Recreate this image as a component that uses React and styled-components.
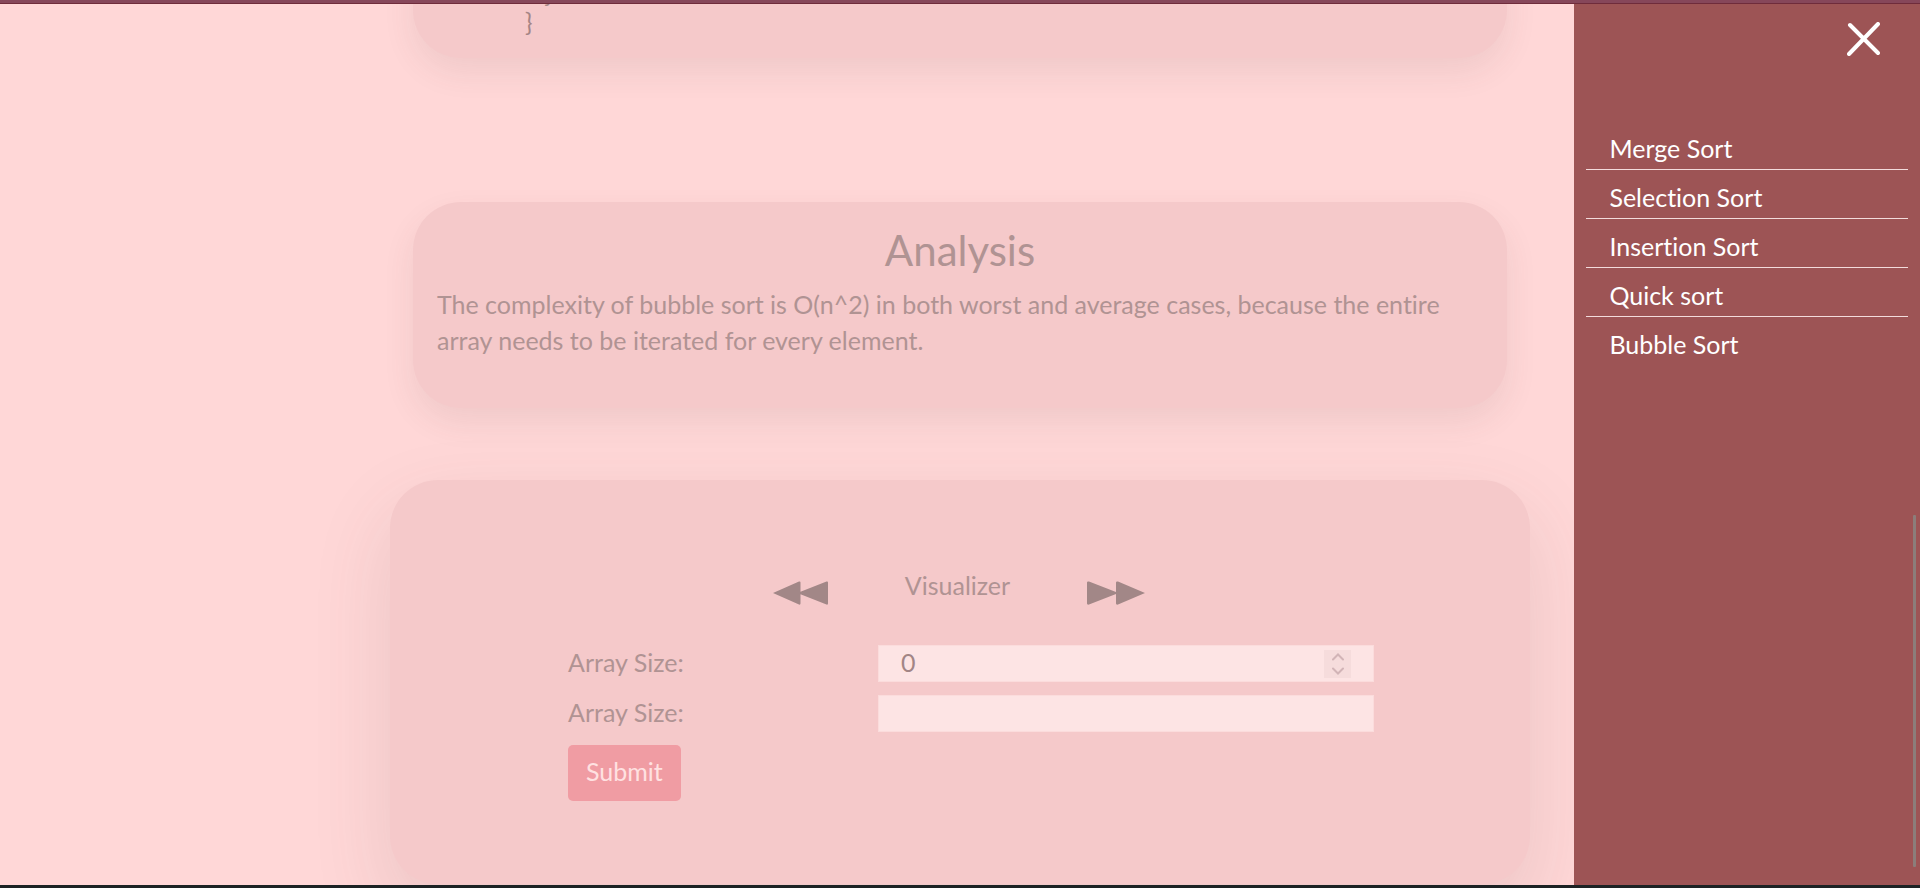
import React, { useState } from "react";
import styled, { createGlobalStyle } from "styled-components";

const GlobalStyle = createGlobalStyle`
  *, *::before, *::after { box-sizing: border-box; }
  html, body { margin: 0; padding: 0; }
  body {
    background: #ffd7d7;
    color: #b09393;
    font-family: Lato, "Liberation Sans", sans-serif;
    font-size: 25px;
    line-height: 36px;
    font-variant-ligatures: none;
  }
`;

const Page = styled.div`
  display: flex;
  flex-direction: column;
  height: 100vh;
  overflow: hidden;
  border-top: 3px solid #86475a;
  border-bottom: 3px solid #1c2224;
`;

const Main = styled.main`
  flex: 1;
  min-height: 0;
  display: flex;
  flex-direction: column;
  justify-content: flex-end;
  align-items: center;
  overflow: hidden;
  border-top: 1px solid #6f2c3b;
  padding: 0 24px 1px;
`;

const Column = styled.div`
  width: 100%;
  max-width: 1140px;
  display: flex;
  flex-direction: column;
  flex-shrink: 0;
`;

const Card = styled.section`
  background: #f5c9ca;
  border-radius: 48px;
`;

const TextCard = styled(Card)`
  margin: 0 23px;
  box-shadow: 0 14px 32px rgba(90, 70, 70, 0.09);
`;

const CodeCard = styled(TextCard)`
  margin-bottom: 144px;
  padding: 40px 24px 22px 112px;
`;

const Code = styled.pre`
  margin: 0;
  color: #a58585;
  font-family: Lato, "Liberation Sans", sans-serif;
  font-size: 25px;
  line-height: 29px;
`;

const AnalysisCard = styled(TextCard)`
  margin-bottom: 72px;
  padding: 24px 24px 50px;
`;

const Title = styled.h2`
  margin: 0 0 12px;
  font-size: 42px;
  font-weight: 400;
  line-height: 48px;
  text-align: center;
`;

const Paragraph = styled.p`
  margin: 0;
`;

const VisualizerCard = styled(Card)`
  padding: 87px 156px 83px 178px;
  box-shadow: 0 32px 80px rgba(90, 70, 70, 0.13);
`;

const Player = styled.div`
  display: flex;
  justify-content: center;
  align-items: flex-start;
  gap: 77px;
  height: 38px;
  margin: 0 0 40px -24px;
`;

const SkipButton = styled.button`
  display: flex;
  margin: 14px 0 0;
  padding: 0;
  border: 0;
  background: none;
  color: #a28787;
  cursor: pointer;
`;

const Form = styled.form`
  display: grid;
  grid-template-columns: 5fr 8fr;
  row-gap: 13px;
`;

const Label = styled.label`
  line-height: 34px;
`;

const Field = styled.div`
  display: flex;
  align-items: center;
  height: 37px;
  padding: 0 22px;
  background: #fde4e4;
  border: 1px solid #fbdcdc;
`;

const Input = styled.input`
  flex: 1;
  min-width: 0;
  height: 100%;
  padding: 0 0 4px;
  border: 0;
  outline: 0;
  background: none;
  color: #a28585;
  font: inherit;
  appearance: textfield;

  &::-webkit-inner-spin-button,
  &::-webkit-outer-spin-button {
    appearance: none;
    margin: 0;
  }
`;

const Stepper = styled.div`
  display: flex;
  flex-direction: column;
  width: 27px;
  height: 28px;
  background: #f6dcdc;
`;

const StepButton = styled.button`
  flex: 1;
  display: flex;
  align-items: center;
  justify-content: center;
  padding: 0;
  border: 0;
  background: none;
  color: #d2b4b7;
`;

const Submit = styled.button`
  justify-self: start;
  height: 56px;
  padding: 0 18px 4px;
  border: 0;
  border-radius: 5px;
  background: #f09ca3;
  color: #ffe1e1;
  font: inherit;
  cursor: pointer;
`;

const Drawer = styled.aside`
  position: fixed;
  top: 4px;
  right: 0;
  bottom: 3px;
  width: 18%;
  min-width: 260px;
  padding: 18px 12px;
  background: #9d5455;
  color: #fff;
`;

const CloseButton = styled.button`
  display: flex;
  margin: 0 28px 65px auto;
  padding: 0;
  border: 0;
  background: none;
  color: #fff;
  cursor: pointer;
`;

const Menu = styled.ul`
  margin: 0;
  padding: 0;
  list-style: none;
`;

const MenuItem = styled.li`
  border-bottom: 1px solid #f3dcdc;

  &:last-child {
    border-bottom: 0;
  }
`;

const MenuLink = styled.a`
  display: block;
  padding: 9px 23px 3px;
  color: #fff;
  text-decoration: none;
`;

const ScrollThumb = styled.div`
  position: absolute;
  top: 58%;
  right: 4px;
  bottom: 18px;
  width: 3px;
  border-radius: 1px;
  background: #8c7d7a;
`;

const sorts = ["Merge Sort", "Selection Sort", "Insertion Sort", "Quick sort", "Bubble Sort"];

function Chevron({ up }) {
  return (
    <svg width="12" height="8" viewBox="0 0 12 8" fill="none" stroke="currentColor" strokeWidth="2" strokeLinecap="round">
      <path d={up ? "M1 6.5 6 1.5 11 6.5" : "M1 1.5 6 6.5 11 1.5"} />
    </svg>
  );
}

export default function App() {
  const [size, setSize] = useState(0);
  const [values, setValues] = useState("");

  return (
    <>
      <GlobalStyle />
      <Page>
        <Main>
          <Column>
            <CodeCard>
              <Code>{"   }\n}"}</Code>
            </CodeCard>

            <AnalysisCard>
              <Title>Analysis</Title>
              <Paragraph>
                The complexity of bubble sort is O(n^2) in both worst and average cases, because the entire array
                needs to be iterated for every element.
              </Paragraph>
            </AnalysisCard>

            <VisualizerCard>
              <Player>
                <SkipButton type="button" aria-label="Previous step">
                  <svg width="55" height="24" viewBox="0 0 55 24" fill="currentColor">
                    <path d="M0 12 26 .5Q27.500 0 27.500 1.500V10.800L53.500.5Q55 0 55 1.500V22.500Q55 24 53.500 23.500L27.500 13.200V22.500Q27.500 24 26 23.500Z" />
                  </svg>
                </SkipButton>
                <span>Visualizer</span>
                <SkipButton type="button" aria-label="Next step">
                  <svg width="58" height="24" viewBox="0 0 58 24" fill="currentColor">
                    <path d="M58 12 31 .5Q29 0 29 1.500V11L2 .5Q0 0 0 1.500V22.500Q0 24 2 23.500L29 13V22.500Q29 24 31 23.500Z" />
                  </svg>
                </SkipButton>
              </Player>

              <Form onSubmit={(e) => e.preventDefault()}>
                <Label htmlFor="array-size">Array Size:</Label>
                <Field>
                  <Input
                    id="array-size"
                    type="number"
                    value={size}
                    onChange={(e) => setSize(Number(e.target.value))}
                  />
                  <Stepper>
                    <StepButton type="button" aria-label="Increase" onClick={() => setSize(size + 1)}>
                      <Chevron up />
                    </StepButton>
                    <StepButton type="button" aria-label="Decrease" onClick={() => setSize(size - 1)}>
                      <Chevron />
                    </StepButton>
                  </Stepper>
                </Field>
                <Label htmlFor="array-values">Array Size:</Label>
                <Field>
                  <Input id="array-values" type="text" value={values} onChange={(e) => setValues(e.target.value)} />
                </Field>
                <Submit type="submit">Submit</Submit>
              </Form>
            </VisualizerCard>
          </Column>
        </Main>

        <Drawer>
          <CloseButton type="button" aria-label="Close menu">
            <svg width="33" height="34" viewBox="0 0 33 34" fill="none" stroke="currentColor" strokeWidth="4" strokeLinecap="round">
              <path d="M3 3 31 31M31 2 2 32" />
            </svg>
          </CloseButton>
          <nav>
            <Menu>
              {sorts.map((name) => (
                <MenuItem key={name}>
                  <MenuLink href="#">{name}</MenuLink>
                </MenuItem>
              ))}
            </Menu>
          </nav>
          <ScrollThumb />
        </Drawer>
      </Page>
    </>
  );
}
